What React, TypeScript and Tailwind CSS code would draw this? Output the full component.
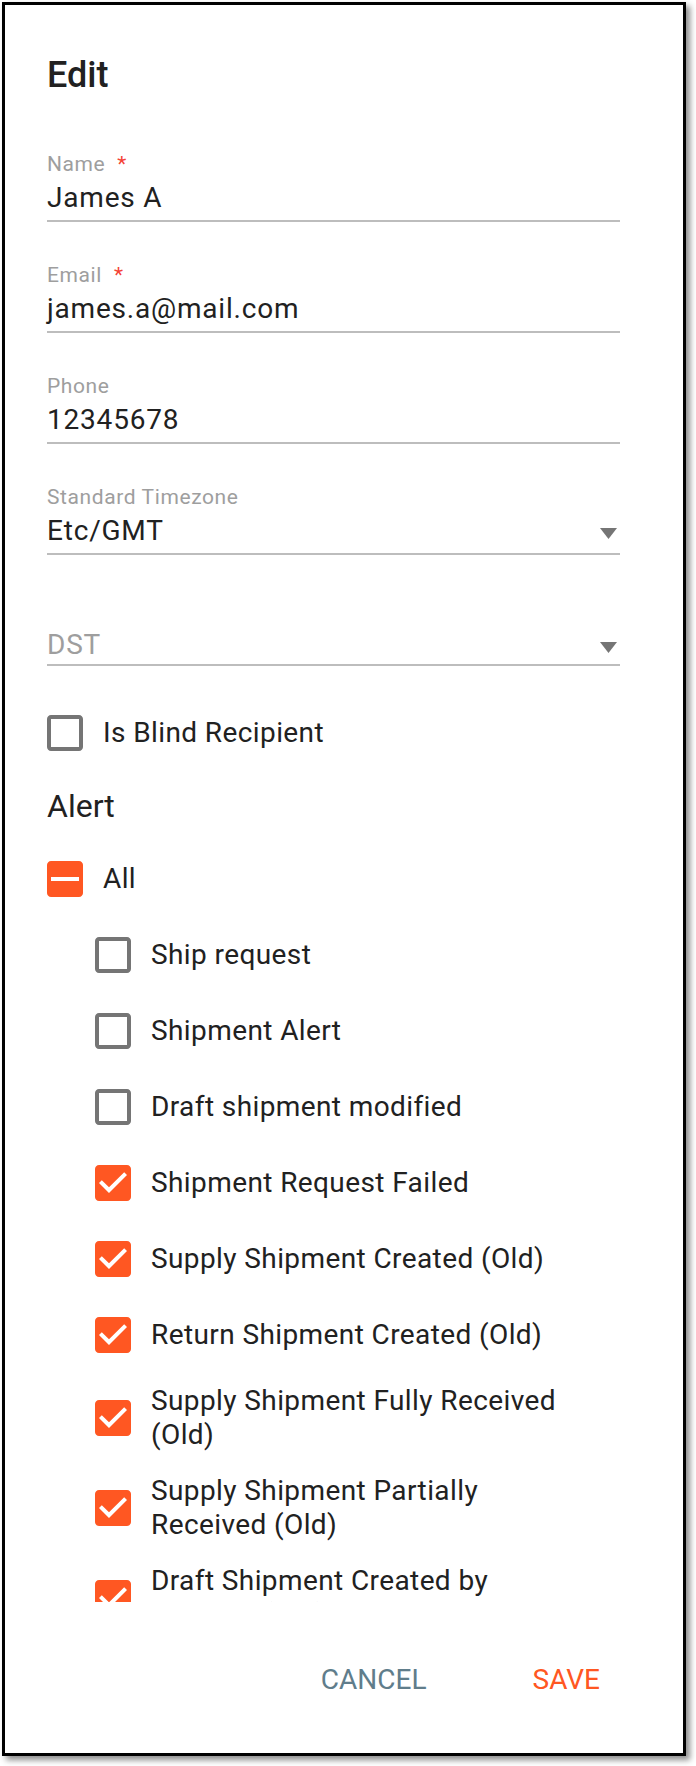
import React from "react";

type CbState = "checked" | "unchecked" | "indeterminate";

function CheckIcon({ state }: { state: CbState }) {
  if (state === "unchecked") {
    return (
      <svg width="36" height="36" viewBox="3 3 18 18" className="shrink-0">
        <path
          fill="#757575"
          d="M19 5v14H5V5h14m0-2H5c-1.1 0-2 .9-2 2v14c0 1.1.9 2 2 2h14c1.1 0 2-.9 2-2V5c0-1.1-.9-2-2-2z"
        />
      </svg>
    );
  }
  if (state === "indeterminate") {
    return (
      <svg width="36" height="36" viewBox="3 3 18 18" className="shrink-0">
        <path
          fill="#ff5722"
          d="M19 3H5c-1.1 0-2 .9-2 2v14c0 1.1.9 2 2 2h14c1.1 0 2-.9 2-2V5c0-1.1-.9-2-2-2z"
        />
        <rect x="5" y="11" width="14" height="2" fill="#ffffff" />
      </svg>
    );
  }
  return (
    <svg width="36" height="36" viewBox="3 3 18 18" className="shrink-0">
      <path
        fill="#ff5722"
        d="M19 3H5c-1.11 0-2 .9-2 2v14c0 1.1.89 2 2 2h14c1.11 0 2-.9 2-2V5c0-1.1-.89-2-2-2z"
      />
      <path fill="#ffffff" d="M10 17l-5-5 1.41-1.41L10 14.17l7.59-7.59L19 8l-9 9z" />
    </svg>
  );
}

function DropArrow() {
  return (
    <svg width="17" height="11" viewBox="0 0 17 11" className="mr-[3px] mt-[5px] shrink-0">
      <polygon points="0,0 17,0 8.5,11" fill="#757575" />
    </svg>
  );
}

function Field({
  label,
  required,
  value,
  placeholder,
  select,
}: {
  label?: string;
  required?: boolean;
  value?: string;
  placeholder?: string;
  select?: boolean;
}) {
  return (
    <div className="flex flex-col">
      <div className="h-[24px] text-[21px] leading-[24px] tracking-[0.6px] text-[#9e9e9e]">
        {label}
        {required && <span className="ml-[12px] text-[#f44336]">*</span>}
      </div>
      <div
        className={
          "flex items-center border-b-2 border-[#bdbdbd] " +
          (placeholder ? "mt-[5px] pt-[3px] pb-[2px]" : "mt-[5px] pb-[5px]")
        }
      >
        <div
          className={
            "flex-1 text-[28px] leading-[34px] tracking-[0.8px] " +
            (placeholder ? "text-[#9e9e9e]" : "text-[#212121]")
          }
        >
          {value ?? placeholder}
        </div>
        {select && <DropArrow />}
      </div>
    </div>
  );
}

function CheckRow({ state, label }: { state: CbState; label: string }) {
  return (
    <div className="flex min-h-[76px] items-center gap-[20px] py-[11px] pr-[35px]">
      <CheckIcon state={state} />
      <span className="text-[28px] leading-[34px] tracking-[0.4px] text-[#212121]">{label}</span>
    </div>
  );
}

const alerts: { label: string; state: CbState }[] = [
  { label: "Ship request", state: "unchecked" },
  { label: "Shipment Alert", state: "unchecked" },
  { label: "Draft shipment modified", state: "unchecked" },
  { label: "Shipment Request Failed", state: "checked" },
  { label: "Supply Shipment Created (Old)", state: "checked" },
  { label: "Return Shipment Created (Old)", state: "checked" },
  { label: "Supply Shipment Fully Received (Old)", state: "checked" },
  { label: "Supply Shipment Partially Received (Old)", state: "checked" },
  { label: "Draft Shipment Created by Supplier (Old)", state: "checked" },
  { label: "Return Shipment Received (Old)", state: "checked" },
];

export default function App() {
  return (
    <div className="min-h-[1766px] w-[696px] bg-white pl-[2px] pt-[2px] font-['Roboto','Liberation_Sans',sans-serif]">
      <div className="flex h-[1754px] w-[684px] flex-col border-[3px] border-black bg-white shadow-[4px_4px_6px_rgba(0,0,0,0.45)]">
        <div className="h-[1597px] overflow-hidden">
          <div className="pl-[42px] pt-[50px] text-[36px] font-medium leading-[40px] text-[#212121]">
            Edit
          </div>
          <div className="ml-[42px] mt-[57px] flex w-[573px] flex-col">
            <div className="flex flex-col gap-[41px]">
              <Field label="Name" required value="James A" />
              <Field label="Email" required value="james.a@mail.com" />
              <Field label="Phone" value="12345678" />
              <Field label="Standard Timezone" value="Etc/GMT" select />
              <Field placeholder="DST" select />
            </div>
            <div className="mt-[29px]">
              <CheckRow state="unchecked" label="Is Blind Recipient" />
            </div>
            <div className="mt-[16px] text-[32px] leading-[38px] text-[#212121]">Alert</div>
            <div className="mt-[16px]">
              <CheckRow state="indeterminate" label="All" />
            </div>
            <div className="ml-[48px] flex flex-col">
              {alerts.map((a) => (
                <CheckRow key={a.label} state={a.state} label={a.label} />
              ))}
            </div>
          </div>
        </div>
        <div className="flex flex-1 items-start justify-end gap-[106px] pr-[83px] pt-[61px] text-[28px] font-normal leading-[34px]">
          <span className="text-[#607d8b]">CANCEL</span>
          <span className="text-[#ff5722]">SAVE</span>
        </div>
      </div>
    </div>
  );
}
